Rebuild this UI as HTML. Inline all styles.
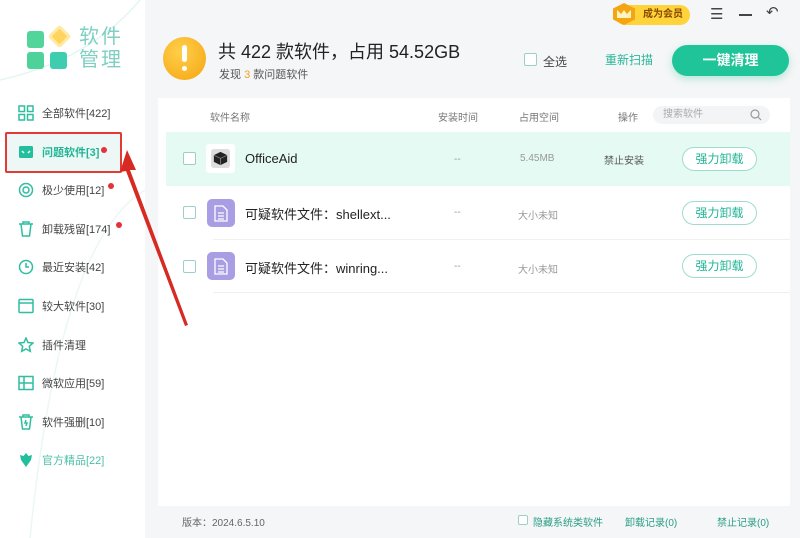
<!DOCTYPE html><html><head><meta charset="utf-8"><style>
*{margin:0;padding:0;box-sizing:border-box}
body{width:800px;height:538px;overflow:hidden;background:#f5f6f7;font-family:"Liberation Sans","Noto Sans CJK SC",sans-serif;position:relative;color:#333}
.side{position:absolute;left:0;top:0;width:145px;height:538px;background:#fff}
.a{position:absolute}
.nav{position:absolute;left:18px;font-size:11px;color:#444;display:flex;align-items:center;gap:8px}
.nav svg{width:16px;height:16px}
.dot{position:absolute;width:6px;height:6px;border-radius:50%;background:#e5323a}
.card{position:absolute;left:158px;top:98px;width:632px;height:408px;background:#fff}
.th{position:absolute;top:109px;font-size:10px;color:#777}
.row{position:absolute;left:166px;width:624px;height:54px}
.cb{position:absolute;width:13px;height:13px;border:1px solid #9ccfc6;border-radius:2px;background:#fff}
.btn{position:absolute;left:682px;width:75px;height:24px;border:1px solid #9fdccf;border-radius:12px;color:#1fb594;font-size:12px;text-align:center;line-height:22px;background:#fff}
.doc{position:absolute;left:41px;width:28px;height:28px;background:#a99de4;border-radius:5px}
.gray{position:absolute;font-size:10px;color:#999}
</style></head><body>
<div class="side"></div>
<svg class="a" style="left:0;top:0" width="145" height="538"><path d="M0 80 Q90 60 140 0" fill="none" stroke="#e3f6f2" stroke-width="1.5"/><path d="M30 538 Q60 240 145 190" fill="none" stroke="#eaf7f4" stroke-width="1.5"/></svg>
<!-- logo -->
<div class="a" style="left:27px;top:31px;width:17px;height:17px;background:#52d59a;border-radius:3px"></div>
<div class="a" style="left:51px;top:28px;width:17px;height:17px;background:#ffd45c;transform:rotate(45deg);border-radius:3px;border:3px solid #ffe9a6"></div>
<div class="a" style="left:27px;top:52px;width:17px;height:17px;background:#4dd39a;border-radius:3px"></div>
<div class="a" style="left:50px;top:52px;width:17px;height:17px;background:#3fcdb0;border-radius:3px"></div>
<div class="a" style="left:79px;top:26px;font-size:20px;line-height:23px;color:#7fcfc3;letter-spacing:2px">软件<br>管理</div>
<!-- nav -->
<div class="a" style="left:5px;top:132px;width:117px;height:41px;background:#edf8f6"></div>
<div class="a" style="left:5px;top:132px;width:117px;height:41px;border:2px solid #e23a34;border-radius:2px"></div>
<div class="nav" style="top:105px"><svg viewBox="0 0 16 16" fill="none" stroke="#2fbea0" stroke-width="1.5"><rect x="1" y="1" width="5.5" height="5.5"/><rect x="9.5" y="1" width="5.5" height="5.5"/><rect x="1" y="9.5" width="5.5" height="5.5"/><rect x="9.5" y="9.5" width="5.5" height="5.5"/></svg>全部软件[422]</div>
<div class="nav" style="top:144px;color:#1fb594;font-weight:bold"><svg viewBox="0 0 16 16"><rect x="1" y="2" width="14" height="12" rx="1.5" fill="#22bf9d"/><path d="M4 7l2 2M12 7l-2 2" stroke="#fff" stroke-width="1.5"/></svg>问题软件[3]</div>
<div class="dot" style="left:101px;top:147px"></div>
<div class="nav" style="top:182px"><svg viewBox="0 0 16 16" fill="none" stroke="#2fbea0" stroke-width="1.5"><circle cx="8" cy="8" r="6.5"/><circle cx="8" cy="8" r="3"/></svg>极少使用[12]</div>
<div class="dot" style="left:108px;top:183px"></div>
<div class="nav" style="top:221px"><svg viewBox="0 0 16 16" fill="none" stroke="#2fbea0" stroke-width="1.5"><path d="M1 3h14M5 3V1h6v2M3 3l1.5 12h7L13 3"/></svg>卸载残留[174]</div>
<div class="dot" style="left:116px;top:222px"></div>
<div class="nav" style="top:259px"><svg viewBox="0 0 16 16" fill="none" stroke="#2fbea0" stroke-width="1.5"><circle cx="8" cy="8" r="6.5"/><path d="M8 4v4h3"/></svg>最近安装[42]</div>
<div class="nav" style="top:298px"><svg viewBox="0 0 16 16" fill="none" stroke="#2fbea0" stroke-width="1.5"><rect x="1" y="1.5" width="14" height="13" rx="1"/><path d="M1 5h14"/></svg>较大软件[30]</div>
<div class="nav" style="top:337px"><svg viewBox="0 0 16 16" fill="none" stroke="#2fbea0" stroke-width="1.5"><path d="M8 1l2 4.5 5 .5-3.7 3.3 1 5L8 12l-4.3 2.3 1-5L1 6l5-.5z"/></svg>插件清理</div>
<div class="nav" style="top:375px"><svg viewBox="0 0 16 16" fill="none" stroke="#2fbea0" stroke-width="1.5"><rect x="1" y="1.5" width="14" height="13"/><path d="M1 8h14M6 1.5v13"/></svg>微软应用[59]</div>
<div class="nav" style="top:414px"><svg viewBox="0 0 16 16" fill="none" stroke="#2fbea0" stroke-width="1.5"><path d="M1 3h14M5 3V1h6v2M3 3l1.5 12h7L13 3M8 6l-1 3h2l-1 3"/></svg>软件强删[10]</div>
<div class="nav" style="top:452px;color:#4cbfa9"><svg viewBox="0 0 16 16" fill="#22bf9d"><path d="M8 1l2.5 3L14 3l-1 5-5 7-5-7-1-5 3.5 1z"/></svg>官方精品[22]</div>
<!-- header -->
<div class="a" style="left:163px;top:37px;width:43px;height:43px;border-radius:50%;background:radial-gradient(circle at 40% 35%,#ffd04a,#f5a412)"></div>
<div class="a" style="left:182px;top:45px;width:5px;height:17px;background:#fff;border-radius:3px"></div>
<div class="a" style="left:182px;top:66px;width:5px;height:5px;background:#fff;border-radius:50%"></div>
<div class="a" style="left:218px;top:38px;font-size:18px;color:#222">共 422 款软件，占用 54.52GB</div>
<div class="a" style="left:219px;top:66px;font-size:11px;color:#555">发现 <span style="color:#f0a020">3</span> 款问题软件</div>
<div class="cb" style="left:524px;top:53px"></div>
<div class="a" style="left:543px;top:53px;font-size:12px;color:#444">全选</div>
<div class="a" style="left:605px;top:51px;font-size:12px;color:#2ab79a">重新扫描</div>
<div class="a" style="left:672px;top:45px;width:117px;height:31px;border-radius:16px;background:#1fc598;color:#fff;font-size:14px;font-weight:bold;text-align:center;line-height:31px;box-shadow:0 3px 8px rgba(31,197,152,.3)">一键清理</div>
<div class="a" style="left:615px;top:5px;width:75px;height:20px;border-radius:10px;background:#ffd43a;font-size:10px;color:#8a4a00;line-height:20px;padding-left:28px;font-weight:bold">成为会员</div>
<div class="a" style="left:613px;top:3px;width:22px;height:22px;background:#f5a412;clip-path:polygon(50% 0,100% 25%,100% 75%,50% 100%,0 75%,0 25%)"></div>
<div class="a" style="left:617px;top:10px;width:14px;height:8px;background:#fff4c0;clip-path:polygon(0 0,30% 50%,50% 0,70% 50%,100% 0,100% 100%,0 100%)"></div>
<div class="a" style="left:710px;top:5px;font-size:15px;color:#444">☰</div>
<div class="a" style="left:739px;top:14px;width:13px;height:2px;background:#444"></div>
<div class="a" style="left:766px;top:3px;font-size:15px;color:#444">↶</div>
<!-- table -->
<div class="card"></div>
<div class="th" style="left:210px">软件名称</div>
<div class="th" style="left:438px">安装时间</div>
<div class="th" style="left:519px">占用空间</div>
<div class="th" style="left:618px">操作</div>
<div class="a" style="left:653px;top:106px;width:117px;height:18px;border-radius:9px;background:#f3f4f5;font-size:10px;color:#aaa;line-height:18px;padding-left:10px">搜索软件</div>
<svg class="a" style="left:750px;top:109px" width="12" height="12" fill="none" stroke="#999" stroke-width="1.2"><circle cx="5" cy="5" r="4"/><path d="M8 8l3 3"/></svg>
<div class="row" style="top:132px;background:#e6faf4">
<div class="cb" style="left:17px;top:20px"></div>
<div class="a" style="left:40px;top:12px;width:29px;height:29px;background:#fff;border-radius:3px"></div>
<svg class="a" style="left:45px;top:17px" width="19" height="19" viewBox="0 0 20 20"><rect width="20" height="20" rx="3" fill="#ddd"/><path d="M10 3l7 3.5v7L10 17l-7-3.5v-7z" fill="#222"/><path d="M3 6.5l7 3.5 7-3.5M10 10v7" stroke="#888" stroke-width=".8" fill="none"/></svg>
<div class="a" style="left:79px;top:19px;font-size:13px;color:#222">OfficeAid</div>
<div class="gray" style="left:288px;top:22px">--</div>
<div class="gray" style="left:354px;top:21px">5.45MB</div>
<div class="a" style="left:438px;top:20px;font-size:10px;color:#555">禁止安装</div>
</div>
<div class="btn" style="top:147px">强力卸载</div>
<div class="row" style="top:186px">
<div class="cb" style="left:17px;top:20px"></div>
<div class="doc" style="top:13px"></div>
<svg class="a" style="left:48px;top:19px" width="14" height="17" fill="none" stroke="#fff" stroke-width="1.3"><path d="M1 1h8l4 4v11H1z"/><path d="M4 8h6M4 11h6M4 14h6"/></svg>
<div class="a" style="left:79px;top:18px;font-size:13px;color:#222">可疑软件文件：shellext...</div>
<div class="gray" style="left:288px;top:21px">--</div>
<div class="gray" style="left:352px;top:21px">大小未知</div>
</div>
<div class="a" style="left:213px;top:239px;width:577px;height:1px;background:#f0f0f0"></div>
<div class="btn" style="top:201px">强力卸载</div>
<div class="row" style="top:240px">
<div class="cb" style="left:17px;top:20px"></div>
<div class="doc" style="top:12px"></div>
<svg class="a" style="left:48px;top:18px" width="14" height="17" fill="none" stroke="#fff" stroke-width="1.3"><path d="M1 1h8l4 4v11H1z"/><path d="M4 8h6M4 11h6M4 14h6"/></svg>
<div class="a" style="left:79px;top:18px;font-size:13px;color:#222">可疑软件文件：winring...</div>
<div class="gray" style="left:288px;top:21px">--</div>
<div class="gray" style="left:352px;top:21px">大小未知</div>
</div>
<div class="a" style="left:213px;top:292px;width:577px;height:1px;background:#f0f0f0"></div>
<div class="btn" style="top:254px">强力卸载</div>
<!-- arrow on top -->
<svg class="a" style="left:110px;top:140px;z-index:5" width="90" height="200"><polygon points="17,10 26,30 20,30 78,185 75,186 16,31 10,32" fill="#d62a22"/></svg>
<!-- footer -->
<div class="a" style="left:182px;top:514px;font-size:10px;color:#666">版本：2024.6.5.10</div>
<div class="cb" style="left:518px;top:515px;width:10px;height:10px"></div>
<div class="a" style="left:533px;top:514px;font-size:10px;color:#2a9d86">隐藏系统类软件</div>
<div class="a" style="left:625px;top:514px;font-size:10px;color:#2a9d86">卸载记录(0)</div>
<div class="a" style="left:717px;top:514px;font-size:10px;color:#2a9d86">禁止记录(0)</div>
</body></html>
